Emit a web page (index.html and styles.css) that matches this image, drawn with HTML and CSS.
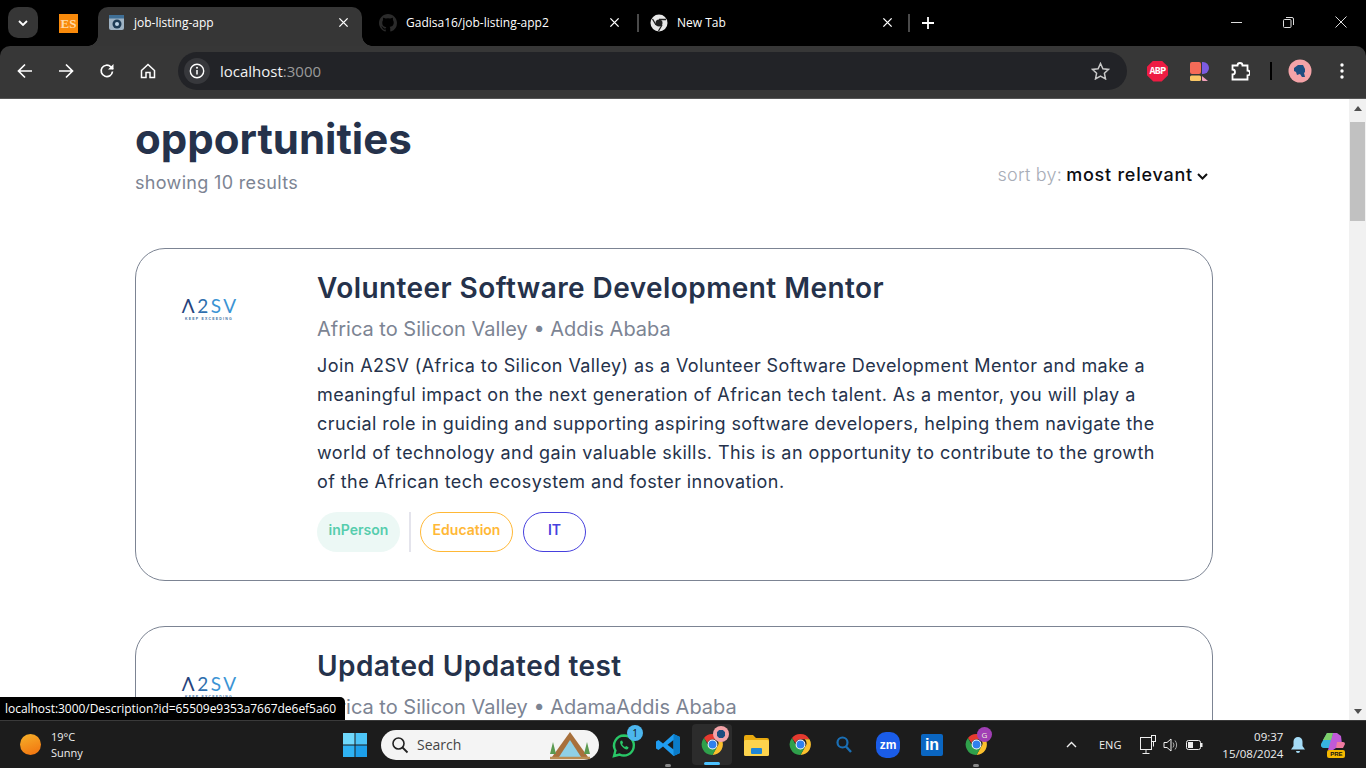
FILE: index.html
```html
<!DOCTYPE html>
<html lang="en">
<head>
<meta charset="utf-8">
<title>job-listing-app</title>
<link rel="stylesheet" href="styles.css">
</head>
<body>
<svg class="defs" width="0" height="0" aria-hidden="true">
  <defs>
    <symbol id="chrome" viewBox="0 0 48 48">
      <path d="M24 4a20 20 0 0 1 17.3 10H24a10 10 0 0 0-9.6 7.2L7.6 11.6A20 20 0 0 1 24 4z" fill="#e53a2f"/>
      <path d="M41.3 14A20 20 0 0 1 24 44l8.6-15a10 10 0 0 0-.6-15z" fill="#fbc02d"/>
      <path d="M7.6 11.6l8.7 15.1A10 10 0 0 0 32.600 29L24 44A20 20 0 0 1 7.600 11.600z" fill="#2fa04b"/>
      <circle cx="24" cy="24" r="8.500" fill="#2f80ed" stroke="#fff" stroke-width="2"/>
    </symbol>
    <symbol id="x" viewBox="0 0 12 12"><path d="M1.500 1.500l9 9M10.500 1.500l-9 9" stroke="#fff" stroke-width="1.500" fill="none"/></symbol>
  </defs>
</svg>

<header class="tabstrip">
  <button class="tab-search" aria-label="Search tabs">
    <svg width="10" height="6" viewBox="0 0 10 6"><path d="M1 1l4 4 4-4" stroke="#fff" stroke-width="1.800" fill="none"/></svg>
  </button>
  <span class="pinned"><span class="es-icon">ES</span></span>
  <div class="tab tab-active">
    <svg class="fav" width="17" height="17" viewBox="0 0 17 17"><rect x="1" y="1" width="15" height="15" rx="2" fill="#9fb3c4"/><rect x="1" y="1" width="15" height="3.500" fill="#3f6f96"/><circle cx="9" cy="10" r="4.500" fill="#1d3b55"/><circle cx="9" cy="10" r="2" fill="#bcd3e6"/></svg>
    <span class="tab-title">job-listing-app</span>
    <svg class="tab-x" width="11" height="11"><use href="#x"/></svg>
  </div>
  <div class="tab">
    <svg class="fav" width="18" height="18" viewBox="0 0 16 16"><path fill="#2b2b2b" d="M8 0C3.600 0 0 3.600 0 8c0 3.500 2.300 6.500 5.500 7.600.4.100.5-.2.500-.4v-1.400c-2.200.5-2.700-1-2.700-1-.4-.9-.9-1.200-.9-1.200-.7-.5.100-.5.100-.5.800.1 1.200.8 1.200.8.700 1.200 1.900.9 2.300.7.100-.5.300-.9.500-1.100-1.800-.2-3.600-.9-3.600-4 0-.9.300-1.600.8-2.100-.1-.2-.4-1 .1-2.100 0 0 .7-.2 2.200.8a7.600 7.600 0 0 1 4 0c1.500-1 2.200-.8 2.200-.8.4 1.100.2 1.900.1 2.100.5.600.8 1.300.8 2.100 0 3.100-1.900 3.700-3.700 3.900.3.300.6.800.6 1.500v2.200c0 .2.100.5.600.4A8 8 0 0 0 16 8c0-4.400-3.600-8-8-8z"/></svg>
    <span class="tab-title">Gadisa16/job-listing-app2</span>
    <svg class="tab-x" width="11" height="11"><use href="#x"/></svg>
  </div>
  <span class="tab-sep"></span>
  <div class="tab">
    <svg class="fav" width="18" height="18" viewBox="0 0 18 18"><circle cx="9" cy="9" r="8.500" fill="#e8e8e8"/><circle cx="9" cy="9" r="3.500" fill="#222"/><path d="M9 5.500h7M6 11L2.500 5M12 11l-3.500 6" stroke="#222" stroke-width="1.300"/></svg>
    <span class="tab-title">New Tab</span>
    <svg class="tab-x" width="11" height="11"><use href="#x"/></svg>
  </div>
  <span class="tab-sep tab-sep-last"></span>
  <svg class="new-tab" width="12" height="12" viewBox="0 0 12 12"><path d="M6 0v12M0 6h12" stroke="#fff" stroke-width="1.800"/></svg>
  <div class="win-controls">
    <svg width="11" height="11" viewBox="0 0 11 11"><path d="M0 5.500h11" stroke="#ddd"/></svg>
    <svg width="11" height="11" viewBox="0 0 11 11"><rect x=".5" y="2.500" width="7.500" height="8" rx="1" stroke="#ddd" fill="none"/><path d="M3 .5h6a1.500 1.500 0 0 1 1.500 1.500v6" stroke="#ddd" fill="none"/></svg>
    <svg width="12" height="12" viewBox="0 0 12 12"><path d="M.5.5l11 11M11.500.5l-11 11" stroke="#ddd"/></svg>
  </div>
</header>

<nav class="toolbar">
  <svg class="tool-icon" width="16" height="16" viewBox="0 0 16 16"><path d="M15 8H2M8 1.500L1.500 8 8 14.500" stroke="#fff" stroke-width="1.700" fill="none"/></svg>
  <svg class="tool-icon" width="16" height="16" viewBox="0 0 16 16"><path d="M1 8h13M8 1.500L14.500 8 8 14.500" stroke="#fff" stroke-width="1.700" fill="none"/></svg>
  <svg class="tool-icon" width="16" height="16" viewBox="0 0 16 16"><path d="M13.500 8.500A5.700 5.700 0 1 1 11.800 3.800L14 6" stroke="#fff" stroke-width="1.700" fill="none"/><path d="M14.500 1v5.500H9z" fill="#fff"/></svg>
  <svg class="tool-icon" width="16" height="16" viewBox="0 0 16 16"><path d="M1.500 7.500L8 1.500l6.500 6v7h-4.500v-5H6v5H1.500z" stroke="#fff" stroke-width="1.500" fill="none"/></svg>
  <div class="omnibox">
    <span class="info-chip">
      <svg width="16" height="16" viewBox="0 0 16 16"><circle cx="8" cy="8" r="6.700" stroke="#fff" stroke-width="1.400" fill="none"/><path d="M8 7v4.500" stroke="#fff" stroke-width="1.500"/><circle cx="8" cy="4.800" r="1" fill="#fff"/></svg>
    </span>
    <span class="url">localhost<span class="url-port">:3000</span></span>
    <svg class="star" width="19" height="18" viewBox="0 0 19 18"><path d="M9.500 1.500l2.400 5.200 5.600.7-4.100 3.900 1.100 5.600-5-2.800-5 2.800 1.100-5.600L1.500 7.400l5.600-.7z" stroke="#c8c8c8" stroke-width="1.500" fill="none"/></svg>
  </div>
  <div class="ext-row">
    <span class="abp">ABP</span>
    <svg width="20" height="20" viewBox="0 0 20 20"><rect x="1" y="1" width="11" height="12" rx="2" fill="#f56b58"/><rect x="1" y="14.500" width="11" height="5.500" rx="1.500" fill="#f9c766"/><path d="M13 1h1a6 6 0 0 1 0 12h-1z" fill="#7c5be0"/><path d="M13 15l6 5h-5a1 1 0 0 1-1-1z" fill="#f2a0bb"/></svg>
    <svg width="20" height="20" viewBox="0 0 20 20"><path d="M2 5h5a2.500 2.500 0 0 1 5 0h5v5a2.500 2.500 0 0 1 0 5v4H2v-5a2 2 0 0 0 0-5z" stroke="#fff" stroke-width="1.800" fill="none" transform="translate(.5 -.5)"/></svg>
    <span class="ext-sep"></span>
    <svg width="24" height="24" viewBox="0 0 24 24"><circle cx="12" cy="12" r="11.500" fill="#f4a3a8"/><path d="M6 9l4-3h5l2 4v3l-1 1 1 4h-3l-2-3-3 1-1-3-2-1z" fill="#1d4d80"/></svg>
    <svg width="4" height="16" viewBox="0 0 4 16"><circle cx="2" cy="2" r="1.700" fill="#fff"/><circle cx="2" cy="8" r="1.700" fill="#fff"/><circle cx="2" cy="14" r="1.700" fill="#fff"/></svg>
  </div>
</nav>

<div class="viewport">
  <main class="page">
    <section class="page-head">
      <div>
        <h1 class="page-title">opportunities</h1>
        <p class="page-count">showing 10 results</p>
      </div>
      <div class="sort">
        <span class="sort-label">sort by:</span>
        <span class="sort-value">most relevant</span>
        <svg width="11" height="7" viewBox="0 0 11 7"><path d="M1 1l4.500 4.500L10 1" stroke="#111" stroke-width="2" fill="none"/></svg>
      </div>
    </section>

    <article class="card">
      <div class="logo-col">
        <div class="logo">
          <span class="logo-mark"><span class="logo-dark">Λ</span><span class="logo-mid">2</span><span class="logo-light">SV</span></span>
          <span class="logo-sub">KEEP EXCEEDING</span>
        </div>
      </div>
      <div class="card-body">
        <h2 class="card-title">Volunteer Software Development Mentor</h2>
        <p class="card-sub">Africa to Silicon Valley • Addis Ababa</p>
        <p class="card-desc">Join A2SV (Africa to Silicon Valley) as a Volunteer Software Development Mentor and make a<br>meaningful impact on the next generation of African tech talent. As a mentor, you will play a<br>crucial role in guiding and supporting aspiring software developers, helping them navigate the<br>world of technology and gain valuable skills. This is an opportunity to contribute to the growth<br>of the African tech ecosystem and foster innovation.</p>
        <div class="tags">
          <span class="tag tag-green">inPerson</span>
          <span class="tag-sep"></span>
          <span class="tag tag-orange">Education</span>
          <span class="tag tag-blue">IT</span>
        </div>
      </div>
    </article>

    <article class="card">
      <div class="logo-col">
        <div class="logo">
          <span class="logo-mark"><span class="logo-dark">Λ</span><span class="logo-mid">2</span><span class="logo-light">SV</span></span>
          <span class="logo-sub">KEEP EXCEEDING</span>
        </div>
      </div>
      <div class="card-body">
        <h2 class="card-title">Updated Updated test</h2>
        <p class="card-sub">Africa to Silicon Valley • AdamaAddis Ababa</p>
      </div>
    </article>
  </main>
  <aside class="scrollbar">
    <span class="sb-up"></span>
    <span class="sb-thumb"></span>
    <span class="sb-down"></span>
  </aside>
  <div class="status-tip">localhost:3000/Description?id=65509e9353a7667de6ef5a60</div>
</div>

<footer class="taskbar">
  <div class="weather">
    <span class="sun"></span>
    <span class="weather-text"><span>19°C</span><span>Sunny</span></span>
  </div>
  <div class="task-center">
    <span class="task-cell">
      <svg width="24" height="24" viewBox="0 0 24 24"><rect width="11.500" height="11.500" fill="#6fd8fb"/><rect x="12.500" width="11.500" height="11.500" fill="#4cc4f7"/><rect y="12.500" width="11.500" height="11.500" fill="#2fb2f2"/><rect x="12.500" y="12.500" width="11.500" height="11.500" fill="#1c9fea"/></svg>
    </span>
    <div class="task-search">
      <svg width="18" height="18" viewBox="0 0 18 18"><circle cx="7.500" cy="7.500" r="5.500" stroke="#222" stroke-width="1.600" fill="none"/><path d="M11.500 11.500l5 5" stroke="#222" stroke-width="1.800"/></svg>
      <span class="search-text">Search</span>
      <svg class="search-art" width="42" height="30" viewBox="0 0 42 30"><path d="M3 27L21 2l18 25z" fill="#a8703c"/><path d="M10 27L21 10l11 17z" fill="#8fd0e6"/><path d="M1 24l3-12 3 12zM35 24l3-12 3 12z" fill="#5a9a50"/><path d="M1 28h40" stroke="#b98b52" stroke-width="2.500"/></svg>
    </div>
    <span class="task-cell">
      <svg width="26" height="26" viewBox="0 0 26 26"><path d="M13 3.500a10 10 0 0 0-8.600 15L3 24l5.700-1.400A10 10 0 1 0 13 3.500z" stroke="#29c767" stroke-width="2.400" fill="none"/><path d="M9.500 9c-1 1.500 0 4 2 6s4 3 5.500 2l.6-1.800-2.500-1.200-1 1c-1.500-.7-2.500-1.700-3-3l1-1-1-2.500z" fill="#29c767"/></svg>
      <span class="wa-badge">1</span>
    </span>
    <span class="task-cell">
      <svg width="24" height="24" viewBox="0 0 24 24"><path d="M17.500 1L24 4v16l-6.500 3L7 13.500l-4.500 3.500L0 15.500v-7L2.500 7 7 10.500z" fill="#1f9cf0"/><path d="M17.500 7l-6 4.800 6 4.800z" fill="#1c1c1c"/><path d="M17.500 1L24 4v16l-6.500 3z" fill="#0a7cc9"/></svg>
      <span class="run-dot"></span>
    </span>
    <span class="task-cell task-active">
      <svg width="25" height="25"><use href="#chrome"/></svg>
      <span class="chrome-av"></span>
      <span class="run-bar"></span>
    </span>
    <span class="task-cell">
      <svg width="25" height="22" viewBox="0 0 25 22"><path d="M0 3a2 2 0 0 1 2-2h7l3 3h11a2 2 0 0 1 2 2v2H0z" fill="#e8a90e"/><rect y="6" width="25" height="16" rx="1.500" fill="#fcd34d"/><rect x="7" y="14" width="11" height="6" rx="1" fill="#1f86d6"/></svg>
    </span>
    <span class="task-cell"><svg width="25" height="25"><use href="#chrome"/></svg></span>
    <span class="task-cell">
      <svg width="16" height="17" viewBox="0 0 16 17"><circle cx="6.500" cy="6.500" r="5" stroke="#1a6fb5" stroke-width="2.200" fill="none"/><path d="M10 10.500l5 5.500" stroke="#1a6fb5" stroke-width="2.400"/></svg>
    </span>
    <span class="task-cell"><span class="zoom-icon">zm</span></span>
    <span class="task-cell"><span class="li-icon">in</span></span>
    <span class="task-cell">
      <svg width="25" height="25"><use href="#chrome"/></svg>
      <span class="g-av">G</span>
      <span class="run-dot"></span>
    </span>
  </div>
  <div class="tray">
    <svg class="tray-caret" width="11" height="7" viewBox="0 0 11 7"><path d="M1 6l4.500-4.500L10 6" stroke="#eee" stroke-width="1.400" fill="none"/></svg>
    <span class="tray-lang">ENG</span>
    <svg class="tray-net" width="17" height="20" viewBox="0 0 17 20"><rect x=".5" y="2.500" width="11" height="12" stroke="#eee" fill="none"/><path d="M6 14.500v4M2.500 18.500h7" stroke="#eee"/><rect x="11.500" y=".5" width="4" height="6" fill="#1c1c1c" stroke="#eee"/><path d="M13.500 6.500v5" stroke="#eee"/></svg>
    <svg class="tray-vol" width="16" height="16" viewBox="0 0 16 16"><path d="M1 5.500h3L8 2v12l-4-3.500H1z" stroke="#eee" fill="none"/><path d="M10 5.500a4 4 0 0 1 0 5M12 3.500a7 7 0 0 1 0 9" stroke="#aaa" fill="none"/></svg>
    <svg class="tray-bat" width="17" height="12" viewBox="0 0 17 12"><rect x=".5" y="1.500" width="14" height="9" rx="2" stroke="#eee" fill="none"/><rect x="2" y="3" width="5" height="6" fill="#eee"/><rect x="15" y="4" width="1.500" height="4" fill="#eee"/></svg>
    <span class="clock"><span>09:37</span><span>15/08/2024</span></span>
    <svg class="tray-bell" width="14" height="16" viewBox="0 0 14 16"><path d="M7 0a4.500 4.500 0 0 1 4.500 4.500V9l2.500 3.500H0L2.500 9V4.500A4.500 4.500 0 0 1 7 0z" fill="#a5dcf7"/><path d="M5 14h4a2 2 0 0 1-4 0z" fill="#a5dcf7"/></svg>
    <span class="copilot">
      <svg width="24" height="20" viewBox="0 0 24 20"><path d="M6 1h6l-3 15H3a3 3 0 0 1-3-4z" fill="#37b4e0"/><path d="M12 1h4l4 3 1 8-9 6H7z" fill="#c05ad8"/><path d="M6 1h6l-2 7H2z" fill="#7ecf6a"/><path d="M16 10h6a2 2 0 0 1 2 2l-2 4h-7z" fill="#f07ba0"/></svg>
      <span class="pre-badge">PRE</span>
    </span>
  </div>
</footer>
</body>
</html>
```
FILE: styles.css
```css
* { box-sizing: border-box; }
html, body { margin: 0; height: 100%; overflow: hidden; }
body {
  width: 1366px;
  height: 768px;
  display: flex;
  flex-direction: column;
  font-family: "Open Sans", "Liberation Sans", sans-serif;
  background: #000;
}
.defs { position: absolute; }

/* Tab strip */
.tabstrip {
  height: 46px;
  flex: none;
  display: flex;
  align-items: flex-end;
  background: #000;
  color: #fff;
  padding-left: 8px;
}
.tab-search {
  width: 30px;
  height: 31px;
  margin-bottom: 8px;
  border: 0;
  border-radius: 10px;
  background: #363636;
  display: flex;
  align-items: center;
  justify-content: center;
  padding: 0;
}
.pinned {
  width: 60px;
  height: 39px;
  display: flex;
  align-items: center;
  justify-content: center;
  padding-bottom: 7px;
}
.es-icon {
  width: 19px;
  height: 19px;
  margin-left: 1px;
  background: #f98a0b;
  color: #ffd9a8;
  font: 700 13px/19px "Liberation Serif", serif;
  text-align: center;
}
.tab {
  width: 264px;
  height: 39px;
  flex: none;
  display: flex;
  align-items: center;
  padding-left: 10px;
  padding-right: 13px;
  padding-bottom: 8px;
  font-size: 12px;
  position: relative;
}
.tab-active {
  background: #363636;
  border-radius: 10px 10px 0 0;
}
.tab-active::before, .tab-active::after {
  content: "";
  position: absolute;
  bottom: 0;
  width: 10px;
  height: 10px;
  background: radial-gradient(circle at 0 0, #000 9.500px, #363636 10px);
}
.tab-active::before { left: -10px; }
.tab-active::after { right: -10px; background: radial-gradient(circle at 100% 0, #000 9.500px, #363636 10px); }
.tab + .tab { margin-left: 7px; }
.fav { flex: none; margin-right: 9px; }
.tab-title { flex: 1; white-space: nowrap; }
.tab-x { flex: none; }
.tab-sep {
  width: 2px;
  height: 18px;
  margin-bottom: 14px;
  margin-left: 4px;
  margin-right: 1px;
  background: #4a4a4a;
  flex: none;
}
.tab-sep + .tab { width: 266px; }
.tab-sep-last { margin-left: 2px; }
.new-tab { margin: 0 0 17px 11px; flex: none; }
.win-controls {
  margin-left: auto;
  margin-right: 19px;
  margin-bottom: 18px;
  display: flex;
  gap: 41px;
  align-items: center;
}

/* Toolbar */
.toolbar {
  height: 53px;
  flex: none;
  background: #373737;
  border-radius: 10px 10px 0 0;
  display: flex;
  align-items: center;
  padding: 0 0 2px 17px;
  border-bottom: 1px solid #555;
}
.tool-icon { margin-right: 25px; flex: none; }
.omnibox {
  width: 949px;
  height: 38px;
  margin-left: -3px;
  background: #222327;
  border-radius: 19px;
  display: flex;
  align-items: center;
  padding: 0 17px 0 6px;
  color: #fff;
}
.info-chip {
  width: 26px;
  height: 26px;
  border-radius: 50%;
  background: #37383c;
  display: flex;
  align-items: center;
  justify-content: center;
  flex: none;
}
.url { margin-left: 10px; font-size: 15px; flex: 1; color: #f2f2f2; }
.url-port { color: #9a9a9a; }
.ext-row {
  display: flex;
  align-items: center;
  margin-left: 20px;
}
.abp {
  width: 21px;
  height: 21px;
  clip-path: polygon(30% 0, 70% 0, 100% 30%, 100% 70%, 70% 100%, 30% 100%, 0 70%, 0 30%);
  background: #ee1c43;
  color: #fff;
  font: 700 10px/21px "Liberation Mono", monospace;
  text-align: center;
  letter-spacing: -.6px;
  margin-right: 21px;
}
.ext-row svg:nth-of-type(1) { margin-right: 21px; }
.ext-row svg:nth-of-type(2) { margin-right: 20px; }
.ext-sep { width: 2px; height: 18px; background: #000; margin-right: 16px; }
.ext-row svg:nth-of-type(3) { margin-right: 28px; }

/* Page */
.viewport {
  flex: 1;
  min-height: 0;
  display: flex;
  background: #fff;
  position: relative;
  overflow: hidden;
}
.page {
  flex: 1;
  min-width: 0;
  padding: 16px 0 0 135px;
  overflow: hidden;
  font-family: Inter, "Liberation Sans", sans-serif;
}
.page-head {
  width: 1073px;
  display: flex;
  justify-content: space-between;
  align-items: flex-end;
  margin-bottom: 53px;
}
.page-title {
  margin: 0;
  font-size: 42px;
  line-height: 48px;
  font-weight: 700;
  color: #25324b;
}
.page-count {
  margin: 8px 0 0;
  font-size: 18px;
  line-height: 24px;
  letter-spacing: .33px;
  color: #7c8493;
}
.sort {
  display: flex;
  align-items: center;
  gap: 4px;
  margin-bottom: 8px;
  font-size: 18px;
  line-height: 24px;
}
.sort-label { color: #a8adb7; font-weight: 300; letter-spacing: .25px; }
.sort-value { color: #0d0d12; font-weight: 500; letter-spacing: .77px; }
.sort svg { margin-top: 3px; }

.card {
  width: 1078px;
  height: 333px;
  flex: none;
  display: flex;
  border: 1px solid #7c8493;
  border-radius: 30px;
  padding: 21px 0 0 45px;
  margin-bottom: 45px;
}
.logo-col { width: 136px; flex: none; padding-top: 25px; }
.logo { width: 56px; display: flex; flex-direction: column; align-items: center; }
.logo-mark {
  font: 400 19px/22px Lato, "Liberation Sans", sans-serif;
  letter-spacing: 2.500px;
  margin-right: -2.500px;
  white-space: nowrap;
}
.logo-dark { color: #26437c; }
.logo-mid { color: #2f6fae; }
.logo-light { color: #3b94d4; }
.logo-sub {
  font: 700 3.500px/5px "Liberation Sans", sans-serif;
  letter-spacing: 1.200px;
  color: #3f6f9f;
  white-space: nowrap;
}
.card-body { flex: 1; min-width: 0; }
.card-title {
  margin: 0;
  font-size: 28px;
  line-height: 36px;
  font-weight: 600;
  letter-spacing: .43px;
  color: #25324b;
  white-space: nowrap;
}
.card-sub {
  margin: 9px 0 0;
  font-size: 20px;
  line-height: 28px;
  color: #7c8493;
  white-space: nowrap;
}
.card-desc {
  margin: 8px 0 0;
  font-size: 18px;
  line-height: 29px;
  letter-spacing: .42px;
  color: #25324b;
  white-space: nowrap;
}
.tags {
  margin-top: 16px;
  display: flex;
  align-items: stretch;
  gap: 10px;
  height: 40px;
}
.tag {
  display: flex;
  align-items: center;
  justify-content: center;
  padding-bottom: 6px;
  border-radius: 20px;
  font-size: 14px;
  font-weight: 600;
}
.tag-green { width: 83px; background: #ecf8f5; color: #56cdad; }
.tag-sep { width: 2px; margin: 0 -1px 0 -1px; background: #e4e4ec; }
.tag-orange { width: 93px; border: 1px solid #ffb836; color: #ffb836; }
.tag-blue { width: 63px; border: 1px solid #4640de; color: #4640de; }

/* Scrollbar */
.scrollbar {
  width: 17px;
  flex: none;
  background: #f1f1f1;
  display: flex;
  flex-direction: column;
  align-items: center;
}
.sb-up {
  margin-top: 7px;
  width: 0;
  height: 0;
  border: 4.500px solid transparent;
  border-top: 0;
  border-bottom: 5px solid #505050;
}
.sb-thumb { width: 15px; height: 99px; margin-top: 11px; background: #c1c1c1; }
.sb-down {
  margin-top: auto;
  margin-bottom: 6px;
  width: 0;
  height: 0;
  border: 4.500px solid transparent;
  border-bottom: 0;
  border-top: 5px solid #505050;
}
.status-tip {
  position: absolute;
  left: 0;
  bottom: 0;
  width: 345px;
  height: 23px;
  background: #000;
  color: #fff;
  border-top-right-radius: 5px;
  font: 12px/23px "Open Sans", sans-serif;
  letter-spacing: -.04px;
  padding-left: 5px;
  white-space: nowrap;
}

/* Taskbar */
.taskbar {
  height: 48px;
  flex: none;
  background: #1c1c1c;
  border-top: 1px solid #3a3a3a;
  display: flex;
  align-items: center;
  color: #eee;
  font-size: 12px;
  position: relative;
}
.weather {
  width: 333px;
  padding-left: 20px;
  display: flex;
  align-items: center;
  gap: 10px;
  flex: none;
}
.sun {
  width: 21px;
  height: 21px;
  border-radius: 50%;
  background: linear-gradient(160deg, #f6b22a, #f2700e);
}
.weather-text { display: flex; flex-direction: column; font-size: 11px; line-height: 16px; }
.task-center { display: flex; align-items: center; flex: none; }
.task-cell {
  width: 44px;
  height: 40px;
  display: flex;
  align-items: center;
  justify-content: center;
  position: relative;
  flex: none;
}
.task-search {
  width: 218px;
  height: 30px;
  margin: 0 3px 0 4px;
  background: #f4f4f4;
  border-radius: 15px;
  color: #444;
  font-size: 14px;
  display: flex;
  align-items: center;
  padding-left: 10px;
  gap: 8px;
}
.search-text { flex: 1; }
.search-art { margin-right: 8px; }
.wa-badge {
  position: absolute;
  top: 0;
  right: 3px;
  width: 16px;
  height: 16px;
  border-radius: 50%;
  background: #4cb6ee;
  color: #111;
  font-size: 10px;
  line-height: 16px;
  text-align: center;
}
.run-dot {
  position: absolute;
  bottom: -2px;
  left: 50%;
  margin-left: -3px;
  width: 6px;
  height: 3px;
  border-radius: 2px;
  background: #888;
}
.run-bar {
  position: absolute;
  bottom: 0;
  left: 50%;
  margin-left: -8px;
  width: 16px;
  height: 3px;
  border-radius: 2px;
  background: #4cc2ff;
}
.task-active { background: #2c2c2c; border-radius: 4px; height: 41px; width: 40px; margin: 0 2px; }
.chrome-av {
  position: absolute;
  top: 2px;
  right: 3px;
  width: 16px;
  height: 16px;
  border-radius: 50%;
  background: radial-gradient(circle, #1d4d80 35%, #f4a3a8 40%);
}
.g-av {
  position: absolute;
  top: 2px;
  right: 6px;
  width: 15px;
  height: 15px;
  border-radius: 50%;
  background: #a13fb5;
  color: #eed;
  font-size: 8px;
  line-height: 15px;
  text-align: center;
}
.zoom-icon {
  width: 24px;
  height: 26px;
  border-radius: 10px;
  background: #1a5ce8;
  color: #fff;
  font: 700 12px/26px "Liberation Sans", sans-serif;
  text-align: center;
}
.li-icon {
  width: 22px;
  height: 22px;
  border-radius: 2px;
  background: #0a66c2;
  color: #fff;
  font: 700 16px/22px "Liberation Sans", sans-serif;
  text-align: center;
}
.tray {
  margin-left: 68px;
  display: flex;
  align-items: center;
  flex: none;
}
.tray-lang { font-size: 11px; margin-left: 22px; margin-right: 19px; }
.tray-vol { margin-left: 6px; }
.tray-bat { margin-left: 7px; }
.clock {
  width: 80px;
  margin-left: 0;
  display: flex;
  flex-direction: column;
  align-items: flex-end;
  line-height: 17px;
  font-size: 11.500px;
}
.tray-bell { margin-left: 8px; }
.copilot { position: relative; margin-left: 16px; width: 24px; height: 26px; }
.pre-badge {
  position: absolute;
  right: 0;
  bottom: 0;
  width: 18px;
  height: 8px;
  border-radius: 2px;
  background: #f5b800;
  color: #111;
  font: 700 6px/8px "Liberation Sans", sans-serif;
  text-align: center;
}
```
